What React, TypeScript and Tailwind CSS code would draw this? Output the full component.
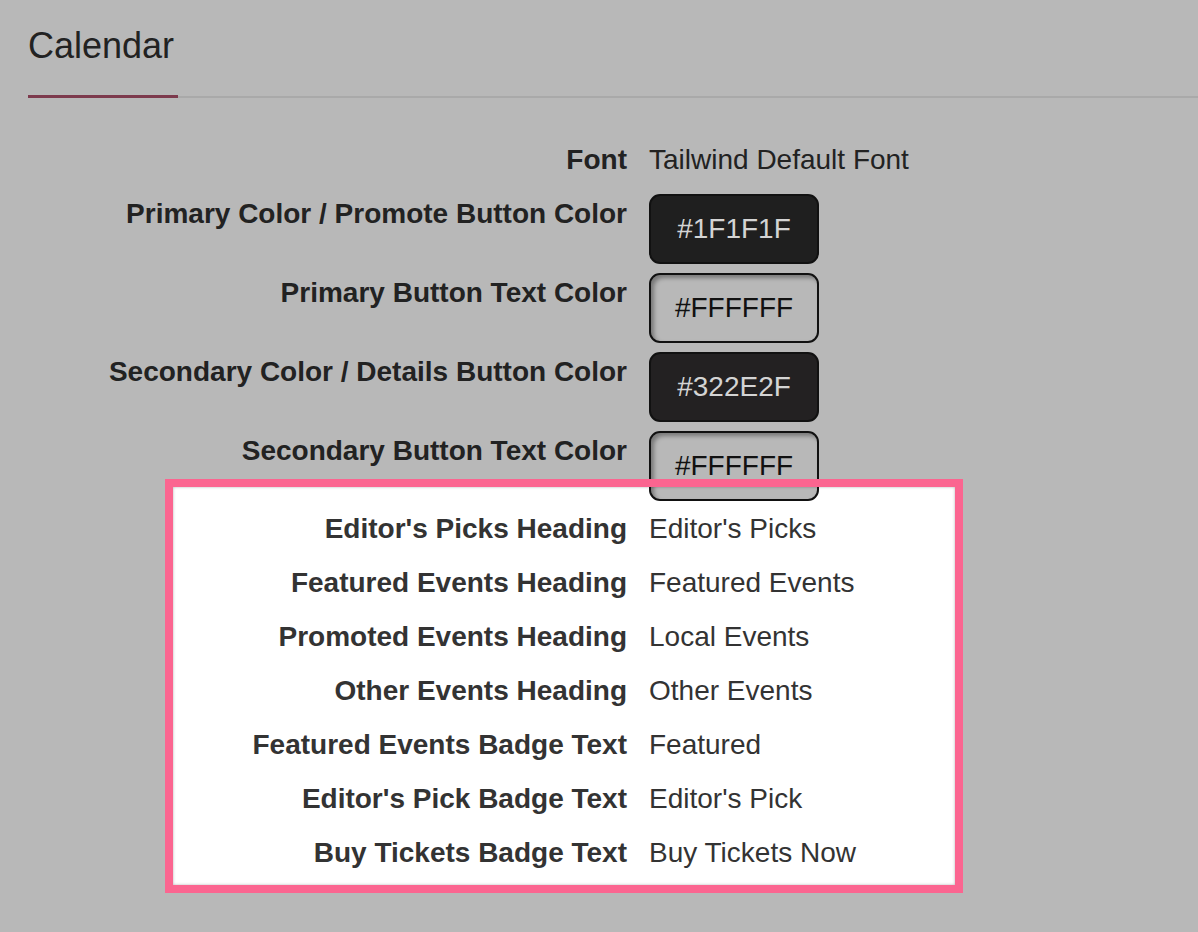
import React from 'react';

const SWATCHES = [
  { label: 'Primary Color / Promote Button Color', value: '#1F1F1F', dark: true, bg: 'bg-[#1f1f1f]' },
  { label: 'Primary Button Text Color', value: '#FFFFFF', dark: false, bg: '' },
  { label: 'Secondary Color / Details Button Color', value: '#322E2F', dark: true, bg: 'bg-[#232122]' },
  { label: 'Secondary Button Text Color', value: '#FFFFFF', dark: false, bg: '' },
];

const TEXT_SETTINGS = [
  { label: "Editor's Picks Heading", value: "Editor's Picks" },
  { label: 'Featured Events Heading', value: 'Featured Events' },
  { label: 'Promoted Events Heading', value: 'Local Events' },
  { label: 'Other Events Heading', value: 'Other Events' },
  { label: 'Featured Events Badge Text', value: 'Featured' },
  { label: "Editor's Pick Badge Text", value: "Editor's Pick" },
  { label: 'Buy Tickets Badge Text', value: 'Buy Tickets Now' },
];

const Swatch: React.FC<{ value: string; dark: boolean; bg: string }> = ({ value, dark, bg }) => (
  <div
    className={`w-[170px] h-[70px] rounded-[11px] border-2 border-[#111] flex items-center justify-center text-[28px] ${
      dark ? `${bg} text-[#d4d4d4]` : 'bg-[#b8b8b8] text-[#111] shadow-[inset_3px_3px_4px_rgba(0,0,0,0.35)]'
    }`}
  >
    {value}
  </div>
);

export default function App() {
  return (
    <div className="min-h-[932px] bg-[#b8b8b8] font-['Liberation_Sans',Arial,sans-serif] overflow-hidden">
      <div className="pl-7 pt-[22px]">
        <h1 className="text-[36px] leading-[48px] text-[#222]">Calendar</h1>
        <div className="mt-[25px] flex items-center">
          <div className="w-[150px] h-[3px] bg-[#7d3a4d]" />
          <div className="flex-1 h-[2px] bg-[#a9a9a9]" />
        </div>
      </div>

      <div className="mt-[46px] flex text-[28px] leading-[32px] text-[#222]">
        <div className="w-[627px] text-right font-bold">Font</div>
        <div className="ml-[22px]">Tailwind Default Font</div>
      </div>

      <div className="mt-[18px] flex flex-col gap-[9px]">
        {SWATCHES.map(s => (
          <div key={s.label} className="relative z-10 flex text-[28px] leading-[32px] text-[#222]">
            <div className="w-[627px] pt-1 text-right font-bold">{s.label}</div>
            <div className="ml-[22px]">
              <Swatch value={s.value} dark={s.dark} bg={s.bg} />
            </div>
          </div>
        ))}
      </div>

      <div className="relative ml-[165px] mt-[-22px] w-[798px] h-[414px] bg-white px-2 pt-[23px]">
        {TEXT_SETTINGS.map(r => (
          <div key={r.label} className="flex text-[28px] leading-[54px] text-[#333]">
            <div className="w-[454px] text-right font-bold">{r.label}</div>
            <div className="ml-[22px]">{r.value}</div>
          </div>
        ))}
        <div className="pointer-events-none absolute inset-0 z-20 border-8 border-[#fb6590]">
          <div className="absolute inset-0 shadow-[inset_0_0_3px_rgba(0,0,0,0.3)]" />
        </div>
      </div>
    </div>
  );
}
